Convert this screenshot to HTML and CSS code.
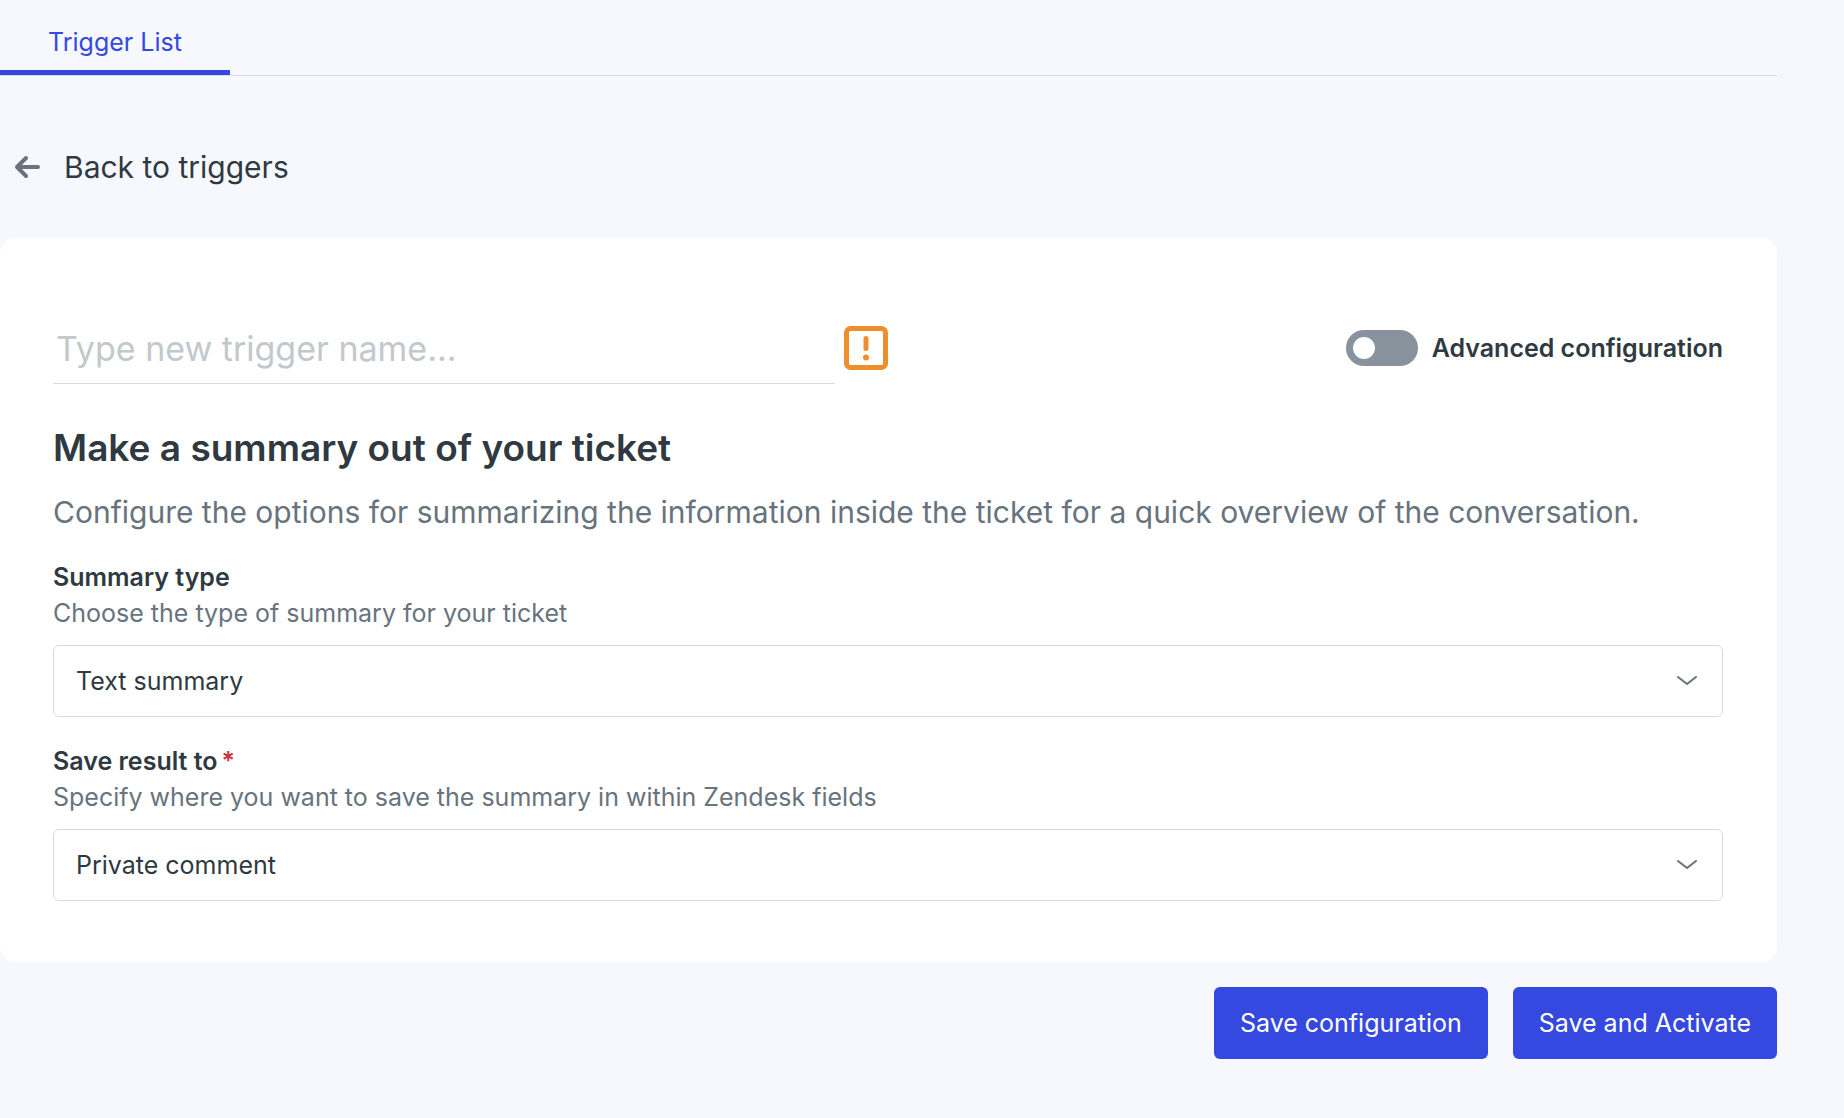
FILE: index.html
```html
<!DOCTYPE html>
<html lang="en">
<head>
  <meta charset="UTF-8">
  <meta name="viewport" content="width=device-width, initial-scale=1">
  <title>Trigger List</title>
  <link rel="stylesheet" href="styles.css">
</head>
<body>
  <main class="page">
    <nav class="tabs">
      <a class="tab active" href="#triggers" aria-current="page">Trigger List</a>
    </nav>

    <a class="back" href="#triggers">
      <svg class="back-icon" viewBox="0 0 28 24" fill="none" aria-hidden="true">
        <path d="M24 12H3M12 3L3 12L12 21" stroke="currentColor" stroke-width="4" stroke-linecap="round" stroke-linejoin="round"/>
      </svg>
      Back to triggers
    </a>

    <form id="trigger-form" class="card">
      <div class="card-top">
        <div class="name-row">
          <input class="name-input" type="text" placeholder="Type new trigger name..." aria-label="Trigger name">
          <svg class="warning-icon" viewBox="0 0 44 44" fill="none" role="img" aria-label="Name is required">
            <rect x="2.5" y="2.5" width="39" height="39" rx="4" stroke="currentColor" stroke-width="5"/>
            <path d="M22 12.5V22.5" stroke="currentColor" stroke-width="5" stroke-linecap="round"/>
            <circle cx="22" cy="31.5" r="3" fill="currentColor"/>
          </svg>
        </div>
        <label class="switch">
          <input type="checkbox" role="switch">
          Advanced configuration
        </label>
      </div>

      <h1>Make a summary out of your ticket</h1>
      <p class="lead">Configure the options for summarizing the information inside the ticket for a quick overview of the conversation.</p>

      <div class="field">
        <label for="summary-type">Summary type</label>
        <p class="hint">Choose the type of summary for your ticket</p>
        <div class="select">
          <select id="summary-type">
            <option>Text summary</option>
          </select>
          <svg class="chevron" viewBox="0 0 20 10" fill="none" aria-hidden="true">
            <path d="M1 1L10 8L19 1" stroke="currentColor" stroke-width="2" stroke-linecap="round" stroke-linejoin="round"/>
          </svg>
        </div>
      </div>

      <div class="field">
        <label for="save-to">Save result to<span class="required">*</span></label>
        <p class="hint">Specify where you want to save the summary in within Zendesk fields</p>
        <div class="select">
          <select id="save-to" required>
            <option>Private comment</option>
          </select>
          <svg class="chevron" viewBox="0 0 20 10" fill="none" aria-hidden="true">
            <path d="M1 1L10 8L19 1" stroke="currentColor" stroke-width="2" stroke-linecap="round" stroke-linejoin="round"/>
          </svg>
        </div>
      </div>
    </form>

    <div class="actions">
      <button type="submit" form="trigger-form">Save configuration</button>
      <button type="submit" form="trigger-form">Save and Activate</button>
    </div>
  </main>
</body>
</html>
```
FILE: styles.css
```css
* { box-sizing: border-box; }
body {
  margin: 0;
  background: #f7f8fe;
  color: #2f3941;
  font-family: Inter, "Liberation Sans", sans-serif;
  font-size: 25px;
  line-height: 36px;
}
h1, p { margin: 0; }
input, select, button {
  font: inherit;
  color: inherit;
}
.page { margin-right: 67px; }

.tabs {
  display: flex;
  border-bottom: 1px solid #d8dcde;
}
.tab {
  padding: 24px 48px 10px;
  border-bottom: 5px solid transparent;
  text-decoration: none;
}
.tab.active {
  color: #3549e0;
  border-bottom-color: #3549e0;
}

.back {
  display: inline-flex;
  align-items: center;
  gap: 22px;
  margin: 70px 0 50px 14px;
  color: #2f3941;
  font-size: 30px;
  line-height: 42px;
  text-decoration: none;
}
.back-icon {
  width: 28px;
  height: 24px;
  color: #68737d;
}

.card {
  background: #fff;
  border-radius: 16px;
  padding: 74px 54px 61px 53px;
}
.card-top {
  display: flex;
  justify-content: space-between;
  align-items: center;
}
.name-row {
  display: flex;
  align-items: center;
  gap: 9px;
  width: 50%;
}
.name-input {
  flex: 1;
  min-width: 0;
  height: 72px;
  padding: 1px 3px 0;
  border: 0;
  border-bottom: 1px solid #d8dcde;
  background: none;
  font-size: 34px;
}
.name-input::placeholder { color: #c2c8cc; }
.warning-icon {
  width: 44px;
  height: 44px;
  color: #ed8f2d;
}

.switch {
  display: flex;
  align-items: center;
  gap: 14px;
  font-weight: 600;
}
.switch input {
  appearance: none;
  width: 72px;
  height: 36px;
  margin: 0;
  padding: 7px;
  border-radius: 18px;
  background: #87929d;
}
.switch input::before {
  content: "";
  display: block;
  width: 22px;
  height: 22px;
  border-radius: 50%;
  background: #fff;
}
.switch input:checked { background: #3549e0; }
.switch input:checked::before { margin-left: auto; }

h1 {
  margin-top: 40px;
  font-size: 37px;
  line-height: 48px;
  font-weight: 600;
}
.lead {
  margin-top: 20px;
  margin-bottom: 27px;
  color: #68737d;
  font-size: 30px;
  line-height: 40px;
}

.field + .field { margin-top: 26px; }
.field label {
  display: block;
  font-weight: 600;
}
.required {
  margin-left: 4px;
  color: #cc3340;
}
.hint { color: #68737d; }
.select {
  display: grid;
  align-items: center;
  margin-top: 14px;
}
.select > * { grid-area: 1 / 1; }
.select select {
  appearance: none;
  width: 100%;
  height: 72px;
  padding: 0 72px 0 22px;
  border: 1px solid #d8dcde;
  border-radius: 6px;
  background: #fff;
}
.chevron {
  justify-self: end;
  width: 20px;
  height: 10px;
  margin-right: 26px;
  color: #68737d;
  pointer-events: none;
}

.actions {
  display: flex;
  justify-content: flex-end;
  gap: 25px;
  padding: 25px 0;
}
.actions button {
  height: 72px;
  padding: 0 26px;
  border: 0;
  border-radius: 6px;
  background: #3549e0;
  color: #fff;
}
```
